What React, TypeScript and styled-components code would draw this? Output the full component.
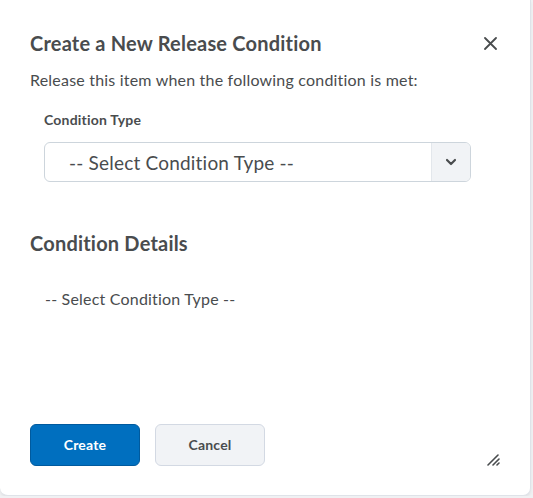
import styled, { createGlobalStyle } from "styled-components";

const GlobalStyle = createGlobalStyle`
    html, body {
        margin: 0;
        padding: 0;
        background: #f0f1f3;
        font-family: Lato, "Noto Sans", sans-serif;
        letter-spacing: 0.2px;
    }
`;

const App = () => {
    return (
        <>
            <GlobalStyle />
            <Dialog>
                <Header>
                    <Title>Create a New Release Condition</Title>
                    <CloseButton aria-label="Close">
                        <svg width="13" height="13" viewBox="0 0 13 13">
                            <path d="M1 1 L12 12 M12 1 L1 12" stroke="#494c4e" strokeWidth="1.8" strokeLinecap="round" />
                        </svg>
                    </CloseButton>
                </Header>
                <Intro>Release this item when the following condition is met:</Intro>
                <Field>
                    <Label>Condition Type</Label>
                    <Select>
                        <SelectValue>-- Select Condition Type --</SelectValue>
                        <SelectArrow>
                            <svg width="12" height="8" viewBox="0 0 12 8">
                                <path d="M2 2 L6 6 L10 2" stroke="#494c4e" strokeWidth="2.2" fill="none" strokeLinecap="round" strokeLinejoin="round" />
                            </svg>
                        </SelectArrow>
                    </Select>
                </Field>
                <SectionTitle>Condition Details</SectionTitle>
                <Placeholder>-- Select Condition Type --</Placeholder>
                <Footer>
                    <Button $primary>Create</Button>
                    <Button>Cancel</Button>
                    <Resize>
                        <svg width="13" height="13" viewBox="0 0 13 13">
                            <path d="M1 12 L11 2 M6 12 L12 6 M10 12 L12 10" stroke="#494c4e" strokeWidth="1.6" strokeLinecap="round" />
                        </svg>
                    </Resize>
                </Footer>
            </Dialog>
        </>
    );
};

export default App;

const Dialog = styled.div`
    box-sizing: border-box;
    width: 531px;
    height: 496px;
    background: #fff;
    border-right: 1px solid #dfe3e9;
    border-bottom: 1px solid #dfe3e9;
    border-radius: 0 0 8px 8px;
    box-shadow: 0 2px 3px rgba(0, 0, 0, 0.06);
    padding: 29px 0 0 30px;
    display: flex;
    flex-direction: column;
    color: #494c4e;
`;

const Header = styled.div`
    display: flex;
    align-items: center;
    justify-content: space-between;
    padding-right: 33px;
`;

const Title = styled.h1`
    margin: 0;
    font-size: 20px;
    line-height: 28px;
    font-weight: 700;
    color: #494c4e;
`;

const CloseButton = styled.button`
    border: none;
    background: none;
    padding: 0;
    width: 13px;
    height: 13px;
    display: flex;
`;

const Intro = styled.p`
    margin: 11px 0 0;
    font-size: 16px;
    line-height: 24px;
`;

const Field = styled.div`
    padding-left: 14px;
    margin-top: 19px;
`;

const Label = styled.div`
    font-size: 14px;
    font-weight: 700;
    line-height: 18px;
`;

const Select = styled.div`
    box-sizing: border-box;
    margin-top: 13px;
    width: 427px;
    height: 40px;
    border: 1px solid #cdd5dc;
    border-radius: 6px;
    display: flex;
    overflow: hidden;
`;

const SelectValue = styled.div`
    flex: 1;
    display: flex;
    align-items: center;
    padding-left: 24px;
    font-size: 19px;
    color: #494c4e;
`;

const SelectArrow = styled.div`
    width: 38px;
    background: #f1f3f6;
    border-left: 1px solid #e3e7ec;
    display: flex;
    align-items: center;
    justify-content: center;
`;

const SectionTitle = styled.h2`
    margin: 47px 0 0;
    font-size: 20px;
    line-height: 28px;
    font-weight: 700;
`;

const Placeholder = styled.div`
    margin: 30px 0 0 15px;
    font-size: 16px;
    line-height: 24px;
`;

const Footer = styled.div`
    margin-top: auto;
    margin-bottom: 29px;
    display: flex;
    align-items: center;
    gap: 15px;
    padding-right: 30px;
`;

const Button = styled.button<{ $primary?: boolean }>`
    box-sizing: border-box;
    width: 110px;
    height: 42px;
    border-radius: 6px;
    font-family: Lato, "Noto Sans", sans-serif;
    font-size: 14px;
    font-weight: 700;
    letter-spacing: 0.2px;
    border: 1px solid ${({ $primary }) => ($primary ? "#005a9e" : "#d3d9e3")};
    background: ${({ $primary }) => ($primary ? "#006fbf" : "#f1f3f6")};
    color: ${({ $primary }) => ($primary ? "#fff" : "#494c4e")};
`;

const Resize = styled.div`
    margin-left: auto;
    margin-top: 30px;
    display: flex;
`;
